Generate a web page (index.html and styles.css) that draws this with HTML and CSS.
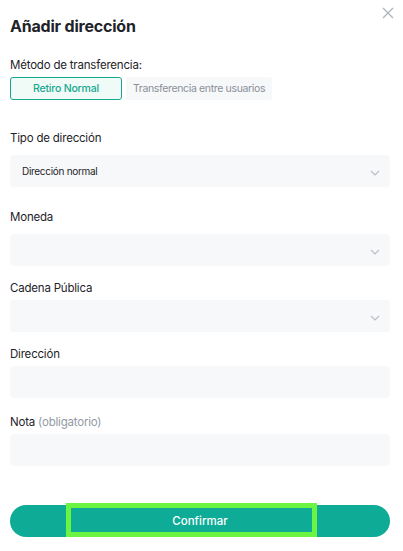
FILE: index.html
```html
<!DOCTYPE html>
<html lang="es">
<head>
<meta charset="utf-8">
<link rel="stylesheet" href="styles.css">
</head>
<body>
<div class="modal">
  <div class="close" aria-label="Cerrar">
    <svg width="12" height="12" viewBox="0 0 12 12"><path d="M1 1 L11 11 M11 1 L1 11" stroke="#aeb4bc" stroke-width="1.3" fill="none"/></svg>
  </div>
  <h1 class="title">Añadir dirección</h1>

  <div class="label label-method">Método de transferencia:</div>
  <div class="tabs">
    <div class="tab tab-active">Retiro Normal</div>
    <div class="tab">Transferencia entre usuarios</div>
  </div>

  <div class="label label-tipo">Tipo de dirección</div>
  <div class="box select box-tipo">
    <span class="value">Dirección normal</span>
    <svg class="chev" width="10" height="6" viewBox="0 0 10 6"><path d="M1 1 L5 5 L9 1" stroke="#b9bec6" stroke-width="1.2" fill="none"/></svg>
  </div>

  <div class="label label-moneda">Moneda</div>
  <div class="box select box-moneda">
    <span class="value"></span>
    <svg class="chev" width="10" height="6" viewBox="0 0 10 6"><path d="M1 1 L5 5 L9 1" stroke="#b9bec6" stroke-width="1.2" fill="none"/></svg>
  </div>

  <div class="label label-cadena">Cadena Pública</div>
  <div class="box select box-cadena">
    <span class="value"></span>
    <svg class="chev" width="10" height="6" viewBox="0 0 10 6"><path d="M1 1 L5 5 L9 1" stroke="#b9bec6" stroke-width="1.2" fill="none"/></svg>
  </div>

  <div class="label label-dir">Dirección</div>
  <div class="box box-dir"></div>

  <div class="label label-nota">Nota <span class="muted">(obligatorio)</span></div>
  <div class="box box-nota"></div>

  <div class="btn">
    <span class="btn-text">Confirmar</span>
    <span class="highlight"></span>
  </div>
</div>
</body>
</html>
```
FILE: styles.css
```css
html, body {
  margin: 0;
  padding: 0;
  background: #ffffff;
}
body {
  font-family: Inter, "Noto Sans", sans-serif;
  color: #1e2329;
}
.modal {
  position: relative;
  width: 403px;
  height: 551px;
  box-sizing: border-box;
  padding: 14px 13px 0 10px;
  display: flex;
  flex-direction: column;
}
.close {
  position: absolute;
  top: 7px;
  left: 382px;
  width: 12px;
  height: 12px;
  display: flex;
}
.title {
  margin: 0;
  font-size: 16px;
  letter-spacing: -0.2px;
  line-height: 24px;
  font-weight: 700;
  color: #1e2329;
}
.label {
  font-size: 11.5px;
  letter-spacing: -0.2px;
  line-height: 16px;
  color: #1e2329;
}
.muted { color: #929aa5; }
.label-method { margin-top: 19px; }
.tabs {
  margin-top: 4px;
  display: flex;
  gap: 4px;
}
.tab {
  height: 23px;
  box-sizing: border-box;
  padding: 0 7px;
  display: flex;
  align-items: center;
  justify-content: center;
  font-size: 10.5px;
  letter-spacing: -0.35px;
  color: #8a9099;
  background: #f7f8fa;
  border-radius: 3px;
}
.tab-active {
  width: 112px;
  border: 1px solid #16a88f;
  background: #f0faf7;
  color: #16a88f;
  font-weight: 500;
  letter-spacing: -0.2px;
}
.label-tipo { margin-top: 30px; }
.label-moneda { margin-top: 22px; }
.label-cadena { margin-top: 14px; }
.label-dir { margin-top: 14px; }
.label-nota { margin-top: 16px; }
.box {
  height: 32px;
  background: #f7f8fa;
  border-radius: 4px;
  box-sizing: border-box;
}
.box-tipo, .box-moneda { margin-top: 9px; }
.box-cadena, .box-dir, .box-nota { margin-top: 4px; }
.select {
  display: flex;
  align-items: center;
  justify-content: space-between;
  padding: 0 10px 0 12px;
}
.value {
  font-size: 10px;
  letter-spacing: -0.3px;
  color: #1e2329;
}
.chev { margin-top: 4px; }
.btn {
  position: relative;
  margin-top: 39px;
  height: 32px;
  border-radius: 16px;
  background: #0eab96;
  display: flex;
  align-items: center;
  justify-content: center;
}
.btn-text {
  color: #ffffff;
  font-size: 11.5px;
  font-weight: 500;
}
.highlight {
  position: absolute;
  left: 56px;
  top: -2px;
  width: 251px;
  height: 34px;
  box-sizing: border-box;
  border: 5px solid #6cf442;
}
```
